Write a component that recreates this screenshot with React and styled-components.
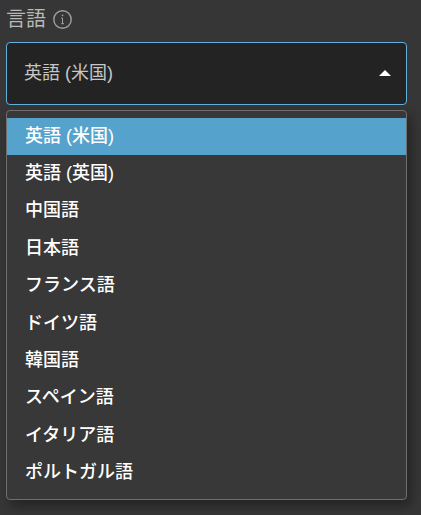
import React, { useState } from "react";
import styled, { createGlobalStyle } from "styled-components";

const GlobalStyle = createGlobalStyle`
  * {
    box-sizing: border-box;
  }
  body {
    margin: 0;
    background: #363636;
    font-family: "Liberation Sans", "Noto Sans CJK JP", sans-serif;
    font-size: 18px;
  }
`;

const Field = styled.div`
  padding: 6px 14px 15px 6px;
`;

const LabelRow = styled.div`
  display: flex;
  align-items: center;
  gap: 7px;
  height: 26px;
  margin-bottom: 10px;
  color: #b9b9b9;
`;

const Label = styled.label`
  font-size: 20px;
  line-height: 26px;
`;

const InfoButton = styled.button`
  display: flex;
  padding: 0;
  border: none;
  background: none;
  color: #a0a0a0;
  cursor: pointer;
`;

const SelectWrap = styled.div`
  position: relative;
`;

const Select = styled.select`
  display: block;
  appearance: none;
  width: 100%;
  height: 63px;
  padding: 0 48px 2px 17px;
  border: 1px solid #62b0e0;
  border-radius: 4px;
  outline: none;
  background: #232323;
  color: #c6c6c6;
  font: inherit;
  cursor: pointer;
`;

const Arrow = styled.svg`
  position: absolute;
  top: 28px;
  right: 16px;
  fill: #fff;
  pointer-events: none;
  transform: ${({ $open }) => ($open ? "none" : "rotate(180deg)")};
`;

const Menu = styled.ul`
  display: grid;
  grid-auto-rows: 1fr;
  min-height: 390px;
  margin: 5px 0 0;
  padding: 7px 0;
  border: 1px solid #6f6f6f;
  border-radius: 4px;
  background: #383838;
  box-shadow: 4px 6px 12px rgba(0, 0, 0, 0.35);
  list-style: none;
`;

const Item = styled.li`
  display: flex;
`;

const ItemButton = styled.button`
  flex: 1;
  padding: 0 18px 6px;
  border: none;
  background: ${({ $active }) => ($active ? "#55a3cc" : "transparent")};
  color: #fff;
  font: inherit;
  font-weight: 500;
  text-align: left;
  cursor: pointer;
`;

const languages = [
  { value: "en-US", name: "英語 (米国)" },
  { value: "en-GB", name: "英語 (英国)" },
  { value: "zh", name: "中国語" },
  { value: "ja", name: "日本語" },
  { value: "fr", name: "フランス語" },
  { value: "de", name: "ドイツ語" },
  { value: "ko", name: "韓国語" },
  { value: "es", name: "スペイン語" },
  { value: "it", name: "イタリア語" },
  { value: "pt", name: "ポルトガル語" },
];

const InfoIcon = () => (
  <svg width="19" height="19" viewBox="0 0 19 19" fill="none">
    <circle cx="9.5" cy="9.5" r="8.7" stroke="currentColor" strokeWidth="1.4" />
    <path d="M8.2 8h1.3v5.7M8.2 13.7h2.8" stroke="currentColor" strokeWidth="1" />
    <circle cx="9.5" cy="5.3" r="0.9" fill="currentColor" />
  </svg>
);

const App = () => {
  const [open, setOpen] = useState(true);
  const [value, setValue] = useState("en-US");

  // the custom menu replaces the native popup
  const onMouseDown = (e) => {
    e.preventDefault();
    setOpen(!open);
  };

  const onPick = (next) => {
    setValue(next);
    setOpen(false);
  };

  return (
    <>
      <GlobalStyle />
      <Field>
        <LabelRow>
          <Label htmlFor="language">言語</Label>
          <InfoButton type="button" aria-label="情報">
            <InfoIcon />
          </InfoButton>
        </LabelRow>
        <SelectWrap>
          <Select
            id="language"
            value={value}
            onMouseDown={onMouseDown}
            onChange={(e) => setValue(e.target.value)}
          >
            {languages.map((lang) => (
              <option key={lang.value} value={lang.value}>
                {lang.name}
              </option>
            ))}
          </Select>
          <Arrow $open={open} width="12" height="6" viewBox="0 0 12 6">
            <path d="M6 0l6 6H0z" />
          </Arrow>
        </SelectWrap>
        {open && (
          <Menu>
            {languages.map((lang) => (
              <Item key={lang.value}>
                <ItemButton
                  type="button"
                  $active={lang.value === value}
                  onClick={() => onPick(lang.value)}
                >
                  {lang.name}
                </ItemButton>
              </Item>
            ))}
          </Menu>
        )}
      </Field>
    </>
  );
};

export default App;
